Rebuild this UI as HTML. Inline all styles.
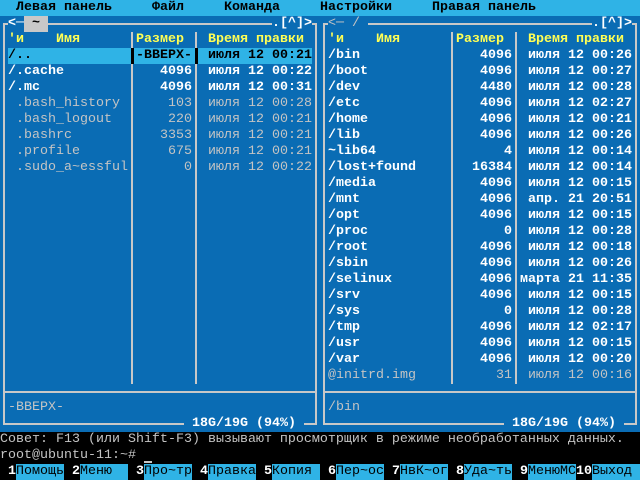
<!DOCTYPE html>
<html><head><meta charset="utf-8"><style>
*{margin:0;padding:0;box-sizing:border-box}
body{width:640px;height:480px;background:#000;overflow:hidden;position:relative;font-family:"Liberation Mono","DejaVu Sans Mono",monospace;font-size:13.333px;font-weight:bold}
.a{position:absolute;height:16px;line-height:16px;white-space:pre}
.p{position:absolute;top:16px;width:320px;height:416px;background:#0a6cb4}
.h{position:absolute;height:2px;background:#c8c8c8}
.v{position:absolute;width:2px;background:#c8c8c8}
.w{color:#fff}.g{color:#c4c4c4;font-weight:normal}.y{color:#ffff55}.k{color:#000}
.row{position:absolute;left:0;width:320px;height:16px;line-height:16px;white-space:pre}
.row span{position:absolute;top:0}
.n{left:8px}.s{left:136px;width:56px;text-align:right}.t{left:200px;width:112px;text-align:right}
.sel{background:#2fb3e6}
</style></head><body>
<!-- menu bar -->
<div class="a k" style="left:0;top:0;width:640px;background:#2fb3e6;font-weight:normal"></div>
<div class="a k" style="left:16px;top:0">Левая панель</div>
<div class="a k" style="left:152px;top:0">Файл</div>
<div class="a k" style="left:224px;top:0">Команда</div>
<div class="a k" style="left:320px;top:0">Настройки</div>
<div class="a k" style="left:432px;top:0">Правая панель</div>

<!-- left panel -->
<div class="p" style="left:0">
 <div class="h" style="left:3px;top:7px;width:314px"></div>
 <div class="h" style="left:3px;top:375px;width:314px"></div>
 <div class="h" style="left:3px;top:407px;width:314px"></div>
 <div class="v" style="left:3px;top:7px;height:402px"></div>
 <div class="v" style="left:315px;top:7px;height:402px"></div>
 <div class="v" style="left:131px;top:16px;height:352px"></div>
 <div class="v" style="left:195px;top:16px;height:352px"></div>
 <div class="a w" style="left:8px;top:0;background:#0a6cb4">&lt;─ </div>
 <div class="a k" style="left:24px;top:0;width:24px;background:#c8c8c8;text-align:center">~</div>
 <div class="a w" style="left:272px;top:0;background:#0a6cb4">.[^]&gt;</div>
 <div class="a w" style="left:184px;top:400px;background:#0a6cb4"> 18G/19G (94%) </div>
 <div class="row y" style="top:16px"><span style="left:8px">'и</span><span style="left:56px">Имя</span><span style="left:136px">Размер</span><span style="left:208px">Время правки</span></div>
 <div class="a sel" style="left:8px;top:32px;width:304px"></div>
 <div class="row k" style="top:32px"><span class="n">/..</span><span class="s">-ВВЕРХ-</span><span class="t">июля 12 00:21</span></div>
 <div style="position:absolute;left:131px;top:32px;width:3px;height:16px;background:#000"></div>
 <div style="position:absolute;left:195px;top:32px;width:3px;height:16px;background:#000"></div>
 <div class="row w" style="top:48px"><span class="n">/.cache</span><span class="s">4096</span><span class="t">июля 12 00:22</span></div>
 <div class="row w" style="top:64px"><span class="n">/.mc</span><span class="s">4096</span><span class="t">июля 12 00:31</span></div>
 <div class="row g" style="top:80px"><span class="n"> .bash_history</span><span class="s">103</span><span class="t">июля 12 00:28</span></div>
 <div class="row g" style="top:96px"><span class="n"> .bash_logout</span><span class="s">220</span><span class="t">июля 12 00:21</span></div>
 <div class="row g" style="top:112px"><span class="n"> .bashrc</span><span class="s">3353</span><span class="t">июля 12 00:21</span></div>
 <div class="row g" style="top:128px"><span class="n"> .profile</span><span class="s">675</span><span class="t">июля 12 00:21</span></div>
 <div class="row g" style="top:144px"><span class="n"> .sudo_a~essful</span><span class="s">0</span><span class="t">июля 12 00:22</span></div>
 <div class="row g" style="top:384px"><span class="n">-ВВЕРХ-</span></div>
</div>

<!-- right panel -->
<div class="p" style="left:320px">
 <div class="h" style="left:3px;top:7px;width:314px"></div>
 <div class="h" style="left:3px;top:375px;width:314px"></div>
 <div class="h" style="left:3px;top:407px;width:314px"></div>
 <div class="v" style="left:3px;top:7px;height:402px"></div>
 <div class="v" style="left:315px;top:7px;height:402px"></div>
 <div class="v" style="left:131px;top:16px;height:352px"></div>
 <div class="v" style="left:195px;top:16px;height:352px"></div>
 <div class="a g" style="left:8px;top:0;background:#0a6cb4">&lt;─ / </div>
 <div class="a w" style="left:272px;top:0;background:#0a6cb4">.[^]&gt;</div>
 <div class="a w" style="left:184px;top:400px;background:#0a6cb4"> 18G/19G (94%) </div>
 <div class="row y" style="top:16px"><span style="left:8px">'и</span><span style="left:56px">Имя</span><span style="left:136px">Размер</span><span style="left:208px">Время правки</span></div>
 <div class="row w" style="top:32px"><span class="n">/bin</span><span class="s">4096</span><span class="t">июля 12 00:26</span></div>
 <div class="row w" style="top:48px"><span class="n">/boot</span><span class="s">4096</span><span class="t">июля 12 00:27</span></div>
 <div class="row w" style="top:64px"><span class="n">/dev</span><span class="s">4480</span><span class="t">июля 12 00:28</span></div>
 <div class="row w" style="top:80px"><span class="n">/etc</span><span class="s">4096</span><span class="t">июля 12 02:27</span></div>
 <div class="row w" style="top:96px"><span class="n">/home</span><span class="s">4096</span><span class="t">июля 12 00:21</span></div>
 <div class="row w" style="top:112px"><span class="n">/lib</span><span class="s">4096</span><span class="t">июля 12 00:26</span></div>
 <div class="row w" style="top:128px"><span class="n">~lib64</span><span class="s">4</span><span class="t">июля 12 00:14</span></div>
 <div class="row w" style="top:144px"><span class="n">/lost+found</span><span class="s">16384</span><span class="t">июля 12 00:14</span></div>
 <div class="row w" style="top:160px"><span class="n">/media</span><span class="s">4096</span><span class="t">июля 12 00:15</span></div>
 <div class="row w" style="top:176px"><span class="n">/mnt</span><span class="s">4096</span><span class="t">апр. 21 20:51</span></div>
 <div class="row w" style="top:192px"><span class="n">/opt</span><span class="s">4096</span><span class="t">июля 12 00:15</span></div>
 <div class="row w" style="top:208px"><span class="n">/proc</span><span class="s">0</span><span class="t">июля 12 00:28</span></div>
 <div class="row w" style="top:224px"><span class="n">/root</span><span class="s">4096</span><span class="t">июля 12 00:18</span></div>
 <div class="row w" style="top:240px"><span class="n">/sbin</span><span class="s">4096</span><span class="t">июля 12 00:26</span></div>
 <div class="row w" style="top:256px"><span class="n">/selinux</span><span class="s">4096</span><span class="t">марта 21 11:35</span></div>
 <div class="row w" style="top:272px"><span class="n">/srv</span><span class="s">4096</span><span class="t">июля 12 00:15</span></div>
 <div class="row w" style="top:288px"><span class="n">/sys</span><span class="s">0</span><span class="t">июля 12 00:28</span></div>
 <div class="row w" style="top:304px"><span class="n">/tmp</span><span class="s">4096</span><span class="t">июля 12 02:17</span></div>
 <div class="row w" style="top:320px"><span class="n">/usr</span><span class="s">4096</span><span class="t">июля 12 00:15</span></div>
 <div class="row w" style="top:336px"><span class="n">/var</span><span class="s">4096</span><span class="t">июля 12 00:20</span></div>
 <div class="row g" style="top:352px"><span class="n">@initrd.img</span><span class="s">31</span><span class="t">июля 12 00:16</span></div>
 <div class="row g" style="top:384px"><span class="n">/bin</span></div>
</div>

<!-- hint + prompt -->
<div class="a g" style="left:0;top:432px">Совет: F13 (или Shift-F3) вызывают просмотрщик в режиме необработанных данных.</div>
<div class="a g" style="left:0;top:448px">root@ubuntu-11:~#</div>
<div style="position:absolute;left:144px;top:461px;width:8px;height:2px;background:#c8c8c8"></div>

<!-- keybar -->
<div class="a w" style="left:8px;top:464px">1</div><div class="a k" style="left:16px;top:464px;width:48px;background:#2fb3e6;font-weight:normal">Помощь</div>
<div class="a w" style="left:72px;top:464px">2</div><div class="a k" style="left:80px;top:464px;width:48px;background:#2fb3e6;font-weight:normal">Меню</div>
<div class="a w" style="left:136px;top:464px">3</div><div class="a k" style="left:144px;top:464px;width:48px;background:#2fb3e6;font-weight:normal">Про~тр</div>
<div class="a w" style="left:200px;top:464px">4</div><div class="a k" style="left:208px;top:464px;width:48px;background:#2fb3e6;font-weight:normal">Правка</div>
<div class="a w" style="left:264px;top:464px">5</div><div class="a k" style="left:272px;top:464px;width:48px;background:#2fb3e6;font-weight:normal">Копия</div>
<div class="a w" style="left:328px;top:464px">6</div><div class="a k" style="left:336px;top:464px;width:48px;background:#2fb3e6;font-weight:normal">Пер~ос</div>
<div class="a w" style="left:392px;top:464px">7</div><div class="a k" style="left:400px;top:464px;width:48px;background:#2fb3e6;font-weight:normal">НвК~ог</div>
<div class="a w" style="left:456px;top:464px">8</div><div class="a k" style="left:464px;top:464px;width:48px;background:#2fb3e6;font-weight:normal">Уда~ть</div>
<div class="a w" style="left:520px;top:464px">9</div><div class="a k" style="left:528px;top:464px;width:48px;background:#2fb3e6;font-weight:normal">МенюМС</div>
<div class="a w" style="left:576px;top:464px">10</div><div class="a k" style="left:592px;top:464px;width:48px;background:#2fb3e6;font-weight:normal">Выход</div>
</body></html>
